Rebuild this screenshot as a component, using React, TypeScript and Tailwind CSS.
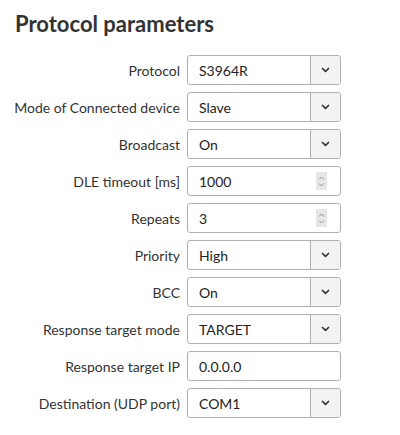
import React from "react";

type Field = {
  label: string;
  value: string;
  kind: "select" | "number" | "text";
};

const fields: Field[] = [
  { label: "Protocol", value: "S3964R", kind: "select" },
  { label: "Mode of Connected device", value: "Slave", kind: "select" },
  { label: "Broadcast", value: "On", kind: "select" },
  { label: "DLE timeout [ms]", value: "1000", kind: "number" },
  { label: "Repeats", value: "3", kind: "number" },
  { label: "Priority", value: "High", kind: "select" },
  { label: "BCC", value: "On", kind: "select" },
  { label: "Response target mode", value: "TARGET", kind: "select" },
  { label: "Response target IP", value: "0.0.0.0", kind: "text" },
  { label: "Destination (UDP port)", value: "COM1", kind: "select" },
];

function Chevron() {
  return (
    <svg width="9" height="6" viewBox="0 0 9 6" fill="none">
      <polyline
        points="1.5,1.5 4.5,4.3 7.5,1.5"
        stroke="#333"
        strokeWidth="1.7"
        strokeLinecap="round"
        strokeLinejoin="round"
      />
    </svg>
  );
}

function Spinner() {
  return (
    <div className="flex h-[18px] w-[11px] flex-col items-center justify-center gap-[3px] bg-[#e6e6e6]">
      <svg width="7" height="4" viewBox="0 0 7 4" fill="none">
        <polyline points="1,3.5 3.5,1 6,3.5" stroke="#8f8f8f" strokeWidth="1" />
      </svg>
      <svg width="7" height="4" viewBox="0 0 7 4" fill="none">
        <polyline points="1,0.5 3.5,3 6,0.5" stroke="#8f8f8f" strokeWidth="1" />
      </svg>
    </div>
  );
}

function Control({ field }: { field: Field }) {
  return (
    <div className="flex h-[30px] w-[154px] items-stretch overflow-hidden rounded-[3px] border border-[#b0b0b0] bg-white">
      <div className="flex flex-1 items-center pl-[11px] text-[14px] text-[#222]">
        {field.value}
      </div>
      {field.kind === "select" ? (
        <div className="flex w-[30px] items-center justify-center border-l border-[#b0b0b0] bg-[#f3f3f3]">
          <Chevron />
        </div>
      ) : null}
      {field.kind === "number" ? (
        <div className="flex items-center pr-[13px]">
          <Spinner />
        </div>
      ) : null}
    </div>
  );
}

export default function App() {
  return (
    <div
      className="h-[435px] w-[400px] bg-white pl-[15px] pt-[10px] text-[#333]"
      style={{ fontFamily: "Lato, 'Open Sans', sans-serif" }}
    >
      <h1 className="text-[22px] font-bold leading-[27px] text-[#333]">
        Protocol parameters
      </h1>

      <div className="mt-[18px] grid grid-cols-[165px_154px] gap-x-[7px] gap-y-[7px]">
        {fields.map((field) => (
          <React.Fragment key={field.label}>
            <label className="flex h-[30px] items-center justify-end whitespace-nowrap text-[14px] text-[#333]">
              {field.label}
            </label>
            <Control field={field} />
          </React.Fragment>
        ))}
      </div>
    </div>
  );
}
